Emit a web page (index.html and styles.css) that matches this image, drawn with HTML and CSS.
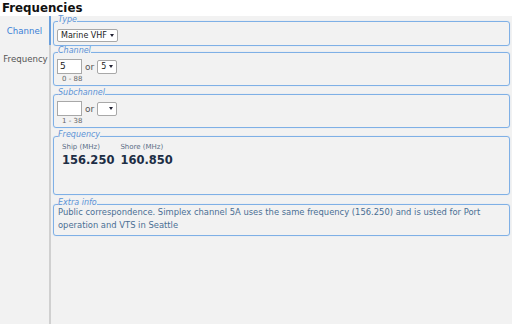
FILE: index.html
```html
<!DOCTYPE html>
<html lang="en">
<head>
    <meta charset="UTF-8">
    <meta name="viewport" content="width=device-width, initial-scale=1.0">
    <title>Frequencies</title>
    <link rel="stylesheet" href="styles.css">
</head>
<body>
    <h1 class="title">Frequencies</h1>
    <div class="page">
        <div class="tabs">
            <div class="tab active">Channel</div>
            <div class="tab">Frequency</div>
        </div>
        <div class="content">
            <fieldset class="box type">
                <legend>Type</legend>
                <div class="row">
                    <span class="select">Marine VHF <span class="caret"></span></span>
                </div>
            </fieldset>
            <fieldset class="box channel">
                <legend>Channel</legend>
                <div class="row">
                    <span class="input">5</span>
                    <span class="or">or</span>
                    <span class="select">5 <span class="caret"></span></span>
                </div>
                <div class="hint">0 - 88</div>
            </fieldset>
            <fieldset class="box">
                <legend>Subchannel</legend>
                <div class="row">
                    <span class="input"></span>
                    <span class="or">or</span>
                    <span class="select empty"><span class="caret"></span></span>
                </div>
                <div class="hint">1 - 38</div>
            </fieldset>
            <fieldset class="box freq">
                <legend>Frequency</legend>
                <div class="freqs">
                    <div class="freq-col">
                        <div class="freq-label">Ship (MHz)</div>
                        <div class="freq-value">156.250</div>
                    </div>
                    <div class="freq-col">
                        <div class="freq-label">Shore (MHz)</div>
                        <div class="freq-value">160.850</div>
                    </div>
                </div>
            </fieldset>
            <fieldset class="box extra">
                <legend>Extra info</legend>
                <p class="info">Public correspondence. Simplex channel 5A uses the same frequency (156.250) and is usted for Port operation and VTS in Seattle</p>
            </fieldset>
        </div>
    </div>
</body>
</html>
```
FILE: styles.css
```css
body {
    margin: 0;
    height: 324px;
    display: flex;
    flex-direction: column;
    background-color: #fff;
    font-family: "DejaVu Sans", sans-serif;
    overflow: hidden;
}
.title {
    margin: 0;
    padding: 1px 0 0 2px;
    height: 16px;
    box-sizing: border-box;
    font-size: 11.8px;
    line-height: 14px;
    font-weight: bold;
    color: #111;
}
.page {
    flex: 1;
    display: flex;
    background-color: #f2f2f2;
}
.tabs {
    width: 49px;
    border-right: 2px solid #d0d0d0;
}
.tab {
    display: flex;
    align-items: center;
    justify-content: center;
    height: 28px;
    margin-right: -2px;
    font-size: 8.6px;
    color: #555;
}
.tab.active {
    height: 29px;
    color: #3a7fd6;
    border-right: 2px solid #6a9fdc;
}
.content {
    flex: 1;
    padding: 0 2px;
}
.box {
    margin: 3px 0 0 0;
    padding: 0 3px 1px 3px;
    border: 1px solid #7fb0e6;
    border-radius: 3px;
    box-shadow: 0 0 1px #a9cbef;
}
.box.type {
    margin-top: 0;
    padding-bottom: 3px;
}
.box.channel {
    margin-top: 1px;
}
legend {
    padding: 0 0 2px 0;
    margin-left: 1px;
    font-size: 8px;
    line-height: 8px;
    font-style: italic;
    color: #5c93d6;
}
.row {
    display: flex;
    align-items: center;
    gap: 3px;
    padding-top: 2px;
}
.type .row {
    padding-top: 3px;
}
.select {
    display: inline-flex;
    align-items: center;
    height: 14px;
    box-sizing: border-box;
    padding: 0 3px;
    background-color: #fff;
    border: 1px solid #a8a8a8;
    border-radius: 2px;
    font-size: 8px;
    color: #222;
    gap: 3px;
}
.type .select {
    height: 13px;
    width: 61px;
}
.select.empty {
    width: 20px;
    justify-content: flex-end;
}
.caret {
    width: 0;
    height: 0;
    border-left: 2.5px solid transparent;
    border-right: 2.5px solid transparent;
    border-top: 3px solid #223;
}
.input {
    display: inline-block;
    width: 25px;
    height: 15px;
    box-sizing: border-box;
    padding: 0 2px;
    background-color: #fff;
    border: 1px solid #a8a8a8;
    font-size: 9px;
    line-height: 13px;
    color: #222;
}
.or {
    font-size: 9px;
    color: #555;
}
.hint {
    font-size: 7px;
    color: #666;
    padding-left: 5px;
    line-height: 9px;
    margin-top: 1px;
}
.freq {
    height: 64px;
    box-sizing: border-box;
}
.freqs {
    display: flex;
    gap: 6px;
    padding: 1px 0 0 5px;
}
.freq-label {
    font-size: 7px;
    color: #5b6e86;
    line-height: 10px;
}
.freq-value {
    margin-top: 1px;
    font-size: 11.5px;
    font-weight: bold;
    color: #1d2e45;
    line-height: 14px;
}
.box.extra {
    margin-top: 4px;
    padding-bottom: 3px;
}
.info {
    margin: -3px 0 0 0;
    padding-left: 1px;
    font-size: 8.4px;
    line-height: 13px;
    color: #4a6f94;
}
```
